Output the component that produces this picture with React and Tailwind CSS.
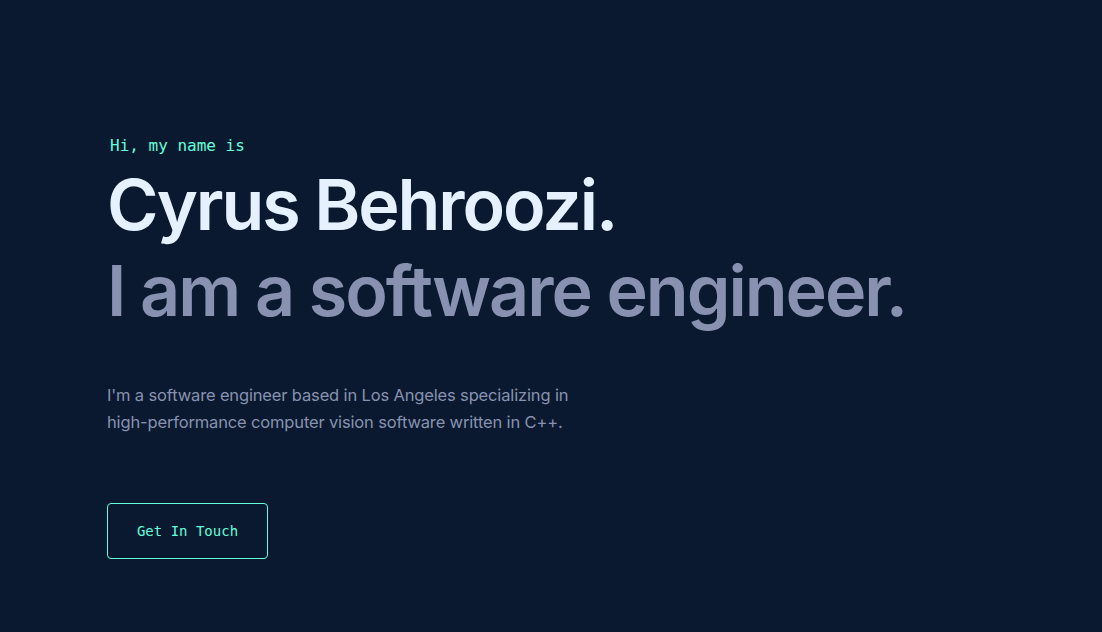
export default function App() {
  return (
    <div className="w-full h-[632px] bg-[#0a192f] overflow-hidden" style={{ fontFamily: 'Inter, "Noto Sans", sans-serif' }}>
      <section className="flex flex-col items-start pl-[107px] pt-[136px]">
        <h1 className="ml-[3px] text-[16px] leading-[20px] text-[#64ffda]" style={{ fontFamily: '"DejaVu Sans Mono", monospace' }}>
          Hi, my name is
        </h1>
        <h2 className="mt-[11px] text-[70px] leading-[76px] font-semibold tracking-[-2.1px] text-[#e6f1ff]">
          Cyrus Behroozi.
        </h2>
        <h3 className="mt-[10px] text-[70px] leading-[76px] font-semibold tracking-[-2px] text-[#8892b0]">
          I am a software engineer.
        </h3>
        <p className="mt-[53px] max-w-[480px] text-[16.5px] leading-[27px] tracking-[-0.15px] text-[#8892b0]">
          I'm a software engineer based in Los Angeles specializing in high-performance computer vision software written in C++.
        </p>
        <button className="mt-[67px] w-[161px] h-[56px] border border-[#64ffda] rounded-[4px] text-[14px] text-[#64ffda]" style={{ fontFamily: '"DejaVu Sans Mono", monospace' }}>
          Get In Touch
        </button>
      </section>
    </div>
  );
}
